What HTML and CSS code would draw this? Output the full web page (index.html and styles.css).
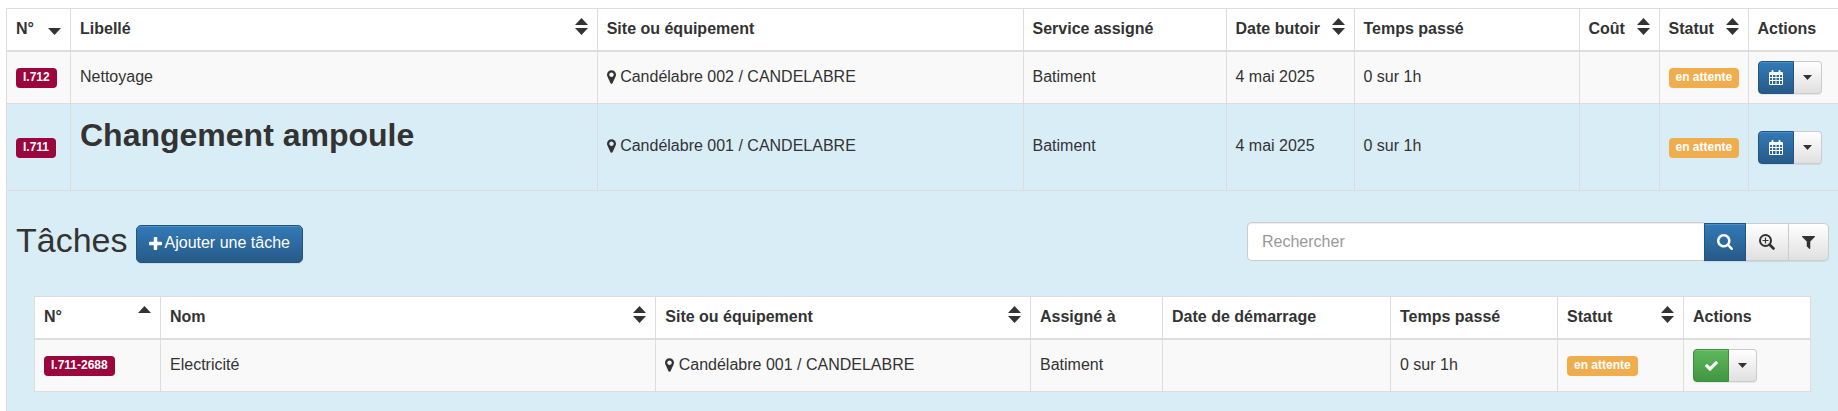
FILE: index.html
```html
<!DOCTYPE html>
<html lang="fr">
<head>
<meta charset="utf-8">
<title>Interventions</title>
<link rel="stylesheet" href="styles.css">
</head>
<body>
<svg class="sprite" aria-hidden="true">
  <symbol id="both" viewBox="0 0 13 17"><path d="M6.500 0 13 7H0zM0 10H13L6.500 17z"/></symbol>
  <symbol id="asc" viewBox="0 0 13 17"><path d="M6.500 0 13 7H0z"/></symbol>
  <symbol id="desc" viewBox="0 0 13 17"><path d="M0 10H13L6.500 17z"/></symbol>
  <symbol id="pin" viewBox="384 128 1024 1536"><path d="M1152 640q0-106-75-181t-181-75-181 75-75 181 75 181 181 75 181-75 75-181zm256 0q0 109-33 179l-364 774q-16 33-47.500 52t-67.500 19-67.500-19-46.500-52l-365-774q-33-70-33-179 0-212 150-362t362-150 362 150 150 362z"/></symbol>
  <symbol id="calendar" viewBox="0 0 14 15"><path fill-rule="evenodd" d="M1 2h1.500V1q0-1 1-1t1 1v1h5V1q0-1 1-1t1 1v1H13q1 0 1 1v11q0 1-1 1H1q-1 0-1-1V3q0-1 1-1zM1 5v2h2V5zM4 5v2h2.500V5zM7.500 5v2H10V5zM11 5v2h2V5zM1 8v2h2V8zM4 8v2h2.500V8zM7.500 8v2H10V8zM11 8v2h2V8zM1 11v3h2v-3zM4 11v3h2.500v-3zM7.500 11v3H10v-3zM11 11v3h2v-3z"/></symbol>
  <symbol id="caret" viewBox="0 0 9 5"><path d="M0 0H9L4.500 5z"/></symbol>
  <symbol id="plus" viewBox="192 128 1408 1408"><path d="M1600 736v192q0 40-28 68t-68 28h-416v416q0 40-28 68t-68 28h-192q-40 0-68-28t-28-68v-416h-416q-40 0-68-28t-28-68v-192q0-40 28-68t68-28h416v-416q0-40 28-68t68-28h192q40 0 68 28t28 68v416h416q40 0 68 28t28 68z"/></symbol>
  <symbol id="check" viewBox="121 334 1550 1188"><path d="M1671 566q0 40-28 68l-724 724-136 136q-28 28-68 28t-68-28l-136-136-362-362q-28-28-28-68t28-68l136-136q28-28 68-28t68 28l294 295 656-657q28-28 68-28t68 28l136 136q28 28 28 68z"/></symbol>
  <symbol id="search" viewBox="64 128 1664 1664"><path d="M1216 832q0-185-131.500-316.500t-316.500-131.500-316.500 131.500-131.500 316.500 131.500 316.500 316.500 131.500 316.500-131.500 131.500-316.500zm512 832q0 52-38 90t-90 38q-54 0-90-38l-343-342q-179 124-399 124-143 0-273.500-55.500t-225-150-150-225-55.500-273.500 55.500-273.500 150-225 225-150 273.500-55.500 273.500 55.500 225 150 150 225 55.500 273.500q0 220-124 399l343 343q37 37 37 90z"/></symbol>
  <symbol id="zoom" viewBox="0 0 16 16"><g fill="none" stroke="currentColor"><circle cx="6.500" cy="6.500" r="5.500" stroke-width="2"/><path stroke-width="2.600" stroke-linecap="round" d="m11 11 3.500 3.500"/><path stroke-width="1.200" d="M6.500 3.500v6M3.500 6.500h6"/></g></symbol>
  <symbol id="filter" viewBox="191 256 1410 1408"><path d="M1595 295q17 41-14 70l-493 493v742q0 42-39 59-13 5-25 5-27 0-45-19l-256-256q-19-19-19-45v-486l-493-493q-31-29-14-70 17-39 59-39h1280q42 0 59 39z"/></symbol>
</svg>

<table class="table outer">
  <colgroup>
    <col class="c-num"><col><col class="c-site"><col class="c-service"><col class="c-due"><col class="c-time"><col class="c-cost"><col class="c-status"><col class="c-actions">
  </colgroup>
  <thead>
    <tr>
      <th scope="col"><div class="head">N° <svg class="sort"><use href="#desc"/></svg></div></th>
      <th scope="col"><div class="head">Libellé <svg class="sort"><use href="#both"/></svg></div></th>
      <th scope="col">Site ou équipement</th>
      <th scope="col">Service assigné</th>
      <th scope="col"><div class="head">Date butoir <svg class="sort"><use href="#both"/></svg></div></th>
      <th scope="col">Temps passé</th>
      <th scope="col"><div class="head">Coût <svg class="sort"><use href="#both"/></svg></div></th>
      <th scope="col"><div class="head">Statut <svg class="sort"><use href="#both"/></svg></div></th>
      <th scope="col">Actions</th>
    </tr>
  </thead>
  <tbody>
    <tr class="odd">
      <td><span class="label id">I.712</span></td>
      <td>Nettoyage</td>
      <td><svg class="pin"><use href="#pin"/></svg> Candélabre 002 / CANDELABRE</td>
      <td>Batiment</td>
      <td>4 mai 2025</td>
      <td>0 sur 1h</td>
      <td></td>
      <td><span class="label waiting">en attente</span></td>
      <td class="buttons"><div class="group"><button class="btn small primary" aria-label="Planifier"><svg class="i-calendar"><use href="#calendar"/></svg></button><button class="btn small toggle" aria-label="Plus d'actions"><svg class="i-caret"><use href="#caret"/></svg></button></div></td>
    </tr>
    <tr class="selected">
      <td><span class="label id">I.711</span></td>
      <td class="title-cell"><h1 class="title">Changement ampoule</h1></td>
      <td><svg class="pin"><use href="#pin"/></svg> Candélabre 001 / CANDELABRE</td>
      <td>Batiment</td>
      <td>4 mai 2025</td>
      <td>0 sur 1h</td>
      <td></td>
      <td><span class="label waiting">en attente</span></td>
      <td class="buttons"><div class="group"><button class="btn small primary" aria-label="Planifier"><svg class="i-calendar"><use href="#calendar"/></svg></button><button class="btn small toggle" aria-label="Plus d'actions"><svg class="i-caret"><use href="#caret"/></svg></button></div></td>
    </tr>
    <tr class="selected">
      <td class="detail" colspan="9">
        <div class="toolbar">
          <h2 class="heading">Tâches</h2>
          <button class="btn primary add"><svg class="i-plus"><use href="#plus"/></svg>Ajouter une tâche</button>
          <form class="search">
            <input class="field" type="text" placeholder="Rechercher" aria-label="Rechercher">
            <button type="button" class="btn primary" aria-label="Lancer la recherche"><svg class="i-search"><use href="#search"/></svg></button>
            <button type="button" class="btn" aria-label="Recherche avancée"><svg class="i-search"><use href="#zoom"/></svg></button>
            <button type="button" class="btn" aria-label="Filtrer"><svg class="i-filter"><use href="#filter"/></svg></button>
          </form>
        </div>
        <div class="tasks">
          <table class="table inner">
            <colgroup>
              <col class="t-num"><col><col class="t-site"><col class="t-assigned"><col class="t-start"><col class="t-time"><col class="t-status"><col class="t-actions">
            </colgroup>
            <thead>
              <tr>
                <th scope="col"><div class="head">N° <svg class="sort"><use href="#asc"/></svg></div></th>
                <th scope="col"><div class="head">Nom <svg class="sort"><use href="#both"/></svg></div></th>
                <th scope="col"><div class="head">Site ou équipement <svg class="sort"><use href="#both"/></svg></div></th>
                <th scope="col">Assigné à</th>
                <th scope="col">Date de démarrage</th>
                <th scope="col">Temps passé</th>
                <th scope="col"><div class="head">Statut <svg class="sort"><use href="#both"/></svg></div></th>
                <th scope="col">Actions</th>
              </tr>
            </thead>
            <tbody>
              <tr class="odd">
                <td><span class="label id">I.711-2688</span></td>
                <td>Electricité</td>
                <td><svg class="pin"><use href="#pin"/></svg> Candélabre 001 / CANDELABRE</td>
                <td>Batiment</td>
                <td></td>
                <td>0 sur 1h</td>
                <td><span class="label waiting">en attente</span></td>
                <td class="buttons"><div class="group"><button class="btn small success" aria-label="Terminer"><svg class="i-check"><use href="#check"/></svg></button><button class="btn small toggle" aria-label="Plus d'actions"><svg class="i-caret"><use href="#caret"/></svg></button></div></td>
              </tr>
            </tbody>
          </table>
        </div>
      </td>
    </tr>
  </tbody>
</table>
</body>
</html>
```
FILE: styles.css
```css
* { box-sizing: border-box; }

body {
  margin: 8px 0 0 6px;
  background: #fff;
  color: #333;
  font: 16px/22px "Liberation Sans", Arial, sans-serif;
}

svg { fill: currentColor; }
.sprite { display: none; }

/* Tables */
.table {
  width: 100%;
  table-layout: fixed;
  border-collapse: collapse;
  background: #fff;
}
.table th, .table td {
  padding: 8px 9px 10px;
  border: 1px solid #ddd;
  text-align: left;
  vertical-align: middle;
}
.table .buttons, .table .title-cell { padding: 9px; }
.table th { padding: 9px 9px 10px; border-bottom-width: 2px; }
.outer > * > tr > :last-child { border-right: 0; }
.table > tbody > .odd { background: #f9f9f9; }
.table > tbody > .selected { background: #d9edf7; }
.table .detail { padding: 31px 9px 20px; border-bottom: 0; }

.c-num { width: 64px; }
.c-site { width: 23.25%; }
.c-service { width: 203px; }
.c-due { width: 128px; }
.c-time { width: 225px; }
.c-cost { width: 80px; }
.c-status { width: 89px; }
.c-actions { width: 90px; }

.t-num { width: 126px; }
.t-site { width: 21.1%; }
.t-assigned { width: 132px; }
.t-start { width: 228px; }
.t-time { width: 167px; }
.t-status { width: 126px; }
.t-actions { width: 127px; }

.head {
  display: flex;
  justify-content: space-between;
  white-space: nowrap;
}
.sort { width: 13px; height: 17px; flex: none; }

.title {
  margin: 0 0 23px;
  font-size: 32px;
  line-height: 45px;
}

.pin { width: 9px; height: 14px; vertical-align: -2px; }

.label {
  padding: 2px 7px 4px;
  border-radius: 4px;
  color: #fff;
  font-size: 12px;
  font-weight: bold;
  white-space: nowrap;
}
.id { background: #9b063c; }
.waiting { background: #f0ad4e; }

/* Buttons */
.btn {
  display: flex;
  align-items: center;
  justify-content: center;
  height: 38px;
  margin: 0;
  padding: 0 13px;
  border: 1px solid #ccc;
  border-radius: 5px;
  background: linear-gradient(#fff, #e0e0e0);
  box-shadow: inset 0 1px 0 rgba(255, 255, 255, .15), 0 1px 1px rgba(0, 0, 0, .075);
  color: #333;
  font: inherit;
  white-space: nowrap;
}
.primary { border-color: #245580; background: linear-gradient(#337ab7, #265a88); color: #fff; }
.success { border-color: #3e8f3e; background: linear-gradient(#5cb85c, #419641); color: #fff; }
.small { width: 36px; height: 33px; padding: 0; border-radius: 4px; }
.toggle { width: 28px; border-left: 0; }
.group { display: flex; }
.group .btn:first-child { border-top-right-radius: 0; border-bottom-right-radius: 0; }
.group .btn:last-child { border-top-left-radius: 0; border-bottom-left-radius: 0; }
.add { gap: 3px; margin-top: 3px; padding: 0 12px 2px; }

.i-calendar { width: 14px; height: 15px; }
.i-caret { width: 9px; height: 5px; }
.i-plus { width: 13px; height: 13px; }
.i-check { width: 13px; height: 10px; }
.i-search { width: 16px; height: 16px; }
.i-filter { width: 13px; height: 13px; }

/* Task panel */
.toolbar {
  display: flex;
  align-items: flex-start;
  gap: 8px;
}
.heading {
  margin: 0;
  font-size: 34px;
  font-weight: normal;
  line-height: 36px;
}
.search {
  display: flex;
  width: 32%;
  min-width: 582px;
  margin-left: auto;
}
.field {
  flex: 1;
  min-width: 0;
  height: 39px;
  padding: 0 14px;
  border: 1px solid #ccc;
  border-right: 0;
  border-radius: 5px 0 0 5px;
  background: #fff;
  box-shadow: inset 0 1px 1px rgba(0, 0, 0, .075);
  color: #555;
  font: inherit;
}
.field::placeholder { color: #999; opacity: 1; }
.search .btn { margin-top: 1px; padding: 0 12px; border-radius: 0; }
.search .btn + .btn { padding: 0 13px; border-left: 0; }
.search .btn + .btn + .btn { border-left: 1px solid #ccc; }
.search .btn:last-child { border-radius: 0 5px 5px 0; }
.search .btn:nth-child(3) { border-right: 0; }

.tasks { padding: 33px 18px 0; }
```
